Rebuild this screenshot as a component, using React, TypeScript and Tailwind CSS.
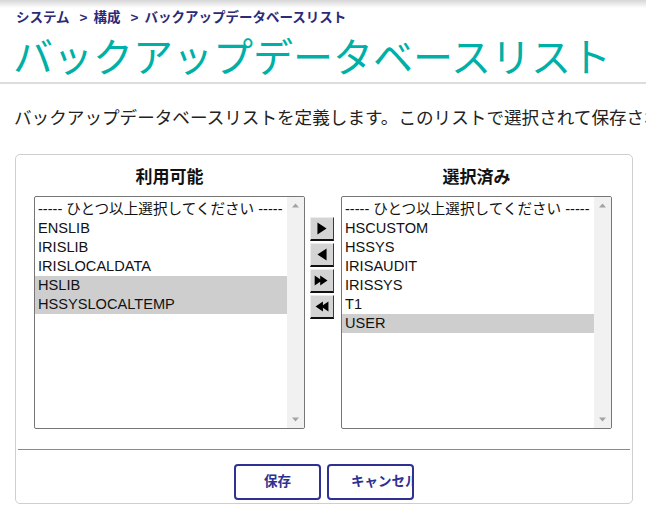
import React from 'react';

const FONT = { fontFamily: '"Liberation Sans", "Noto Sans CJK JP", sans-serif' };

const PLACEHOLDER = '----- ひとつ以上選択してください -----';

type Item = { label: string; selected?: boolean };

const available: Item[] = [
  { label: PLACEHOLDER },
  { label: 'ENSLIB' },
  { label: 'IRISLIB' },
  { label: 'IRISLOCALDATA' },
  { label: 'HSLIB', selected: true },
  { label: 'HSSYSLOCALTEMP', selected: true },
];

const chosen: Item[] = [
  { label: PLACEHOLDER },
  { label: 'HSCUSTOM' },
  { label: 'HSSYS' },
  { label: 'IRISAUDIT' },
  { label: 'IRISSYS' },
  { label: 'T1' },
  { label: 'USER', selected: true },
];

function ListBox({ items }: { items: Item[] }) {
  return (
    <div className="flex h-[233px] w-[271px] overflow-hidden rounded-[2px] border border-[#767676] bg-white">
      <div className="flex-1 pt-[3px]">
        {items.map((it) => (
          <div
            key={it.label}
            className={`h-[19px] whitespace-nowrap pl-[3px] text-[14.6px] leading-[19px] text-[#111] ${
              it.selected ? 'bg-[#cecece]' : ''
            }`}
          >
            {it.label}
          </div>
        ))}
      </div>
      <div className="flex w-[17px] flex-col justify-between bg-[#f1f1f1] py-[6px]">
        <svg width="17" height="5" viewBox="0 0 17 5">
          <polygon points="5,4.5 12,4.5 8.5,0.5" fill="#a3a3a3" />
        </svg>
        <svg width="17" height="5" viewBox="0 0 17 5">
          <polygon points="5,0.5 12,0.5 8.5,4.5" fill="#a3a3a3" />
        </svg>
      </div>
    </div>
  );
}

function ArrowButton({ kind }: { kind: 'add' | 'remove' | 'addAll' | 'removeAll' }) {
  const shapes: Record<string, string[]> = {
    add: ['7,5 17,11.5 7,18'],
    remove: ['17,5 7,11.5 17,18'],
    addAll: ['4,6 12,11.5 4,17', '10,6 18,11.5 10,17'],
    removeAll: ['19,6 11,11.5 19,17', '13,6 5,11.5 13,17'],
  };
  return (
    <button
      type="button"
      className="flex h-[24px] w-[24px] items-center justify-center border-t border-l border-r border-b-2 border-t-[#ececec] border-l-[#ececec] border-r-[#3a3a3a] border-b-[#111] bg-[#d4d4d4] p-0"
    >
      <svg width="22" height="22" viewBox="0 0 24 24">
        {shapes[kind].map((p) => (
          <polygon key={p} points={p} fill="#000" />
        ))}
      </svg>
    </button>
  );
}

export default function App() {
  return (
    <div className="h-[528px] w-[646px] overflow-hidden bg-white" style={FONT}>
      <div className="h-[8px] bg-linear-to-b from-[#d6d6d6] to-white" />
      <div className="flex h-[20px] items-center pl-[16px] text-[13.5px] leading-[20px] font-bold text-[#2b2b78]">
        <span>システム</span>
        <span className="ml-[10px]">&gt;</span>
        <span className="ml-[6px]">構成</span>
        <span className="ml-[10px]">&gt;</span>
        <span className="ml-[6px]">バックアップデータベースリスト</span>
      </div>
      <h1 className="mt-[7px] pl-[13px] text-[40px] leading-[46px] font-normal whitespace-nowrap text-[#00b0a6]">
        バックアップデータベースリスト
      </h1>
      <div className="mt-[1px] h-[2px] bg-[#dddddd]" />
      <p className="mt-[22px] pl-[14px] text-[17.6px] leading-[24px] whitespace-nowrap text-[#222]">
        バックアップデータベースリストを定義します。このリストで選択されて保存されたデータベースのみがバックアップされます。
      </p>

      <div className="mt-[24px] ml-[15px] w-[618px] rounded-[5px] border border-[#cfcfcf] pt-[11px]">
        <div className="flex pl-[18px]">
          <div className="flex flex-col">
            <div className="mb-[6px] h-[24px] text-center text-[17px] leading-[24px] font-bold text-[#111]">
              利用可能
            </div>
            <ListBox items={available} />
          </div>
          <div className="mt-[51px] ml-[5px] flex flex-col gap-[2px]">
            <ArrowButton kind="add" />
            <ArrowButton kind="remove" />
            <ArrowButton kind="addAll" />
            <ArrowButton kind="removeAll" />
          </div>
          <div className="ml-[7px] flex flex-col">
            <div className="mb-[6px] h-[24px] text-center text-[17px] leading-[24px] font-bold text-[#111]">
              選択済み
            </div>
            <ListBox items={chosen} />
          </div>
        </div>

        <div className="mx-[2px] mt-[20px] h-px bg-[#8a8a8a]" />

        <div className="flex justify-center gap-[6px] pt-[14px] pb-[3px]">
          <button
            type="button"
            className="h-[36px] w-[87px] overflow-hidden rounded-[4px] border-2 border-[#2f3192] bg-white px-[22px] text-center text-[13.5px] font-bold whitespace-nowrap text-[#2f3192]"
          >
            保存
          </button>
          <button
            type="button"
            className="h-[36px] w-[87px] overflow-hidden rounded-[4px] border-2 border-[#2f3192] bg-white px-[22px] text-left text-[13.5px] font-bold whitespace-nowrap text-[#2f3192]"
          >
            キャンセル
          </button>
        </div>
      </div>
    </div>
  );
}
